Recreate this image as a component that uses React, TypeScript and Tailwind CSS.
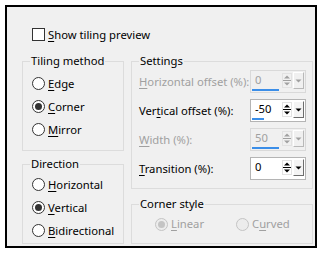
import React from 'react';

function Mn({ t, i }: { t: string; i: number }) {
  return (
    <>
      {t.slice(0, i)}
      <span className="underline decoration-1 underline-offset-[2px]">{t[i]}</span>
      {t.slice(i + 1)}
    </>
  );
}

function Radio({
  label,
  u,
  checked = false,
  disabled = false,
  h = 'h-[23px]',
  w = '',
}: {
  label: string;
  u: number;
  checked?: boolean;
  disabled?: boolean;
  h?: string;
  w?: string;
}) {
  return (
    <div className={`flex items-center ${h} ${w}`}>
      <div
        className={`flex h-[13px] w-[13px] shrink-0 items-center justify-center rounded-full border ${
          disabled ? 'border-[#c4c4c4] bg-[#ececec]' : 'border-[#333333] bg-white'
        }`}
      >
        {checked && (
          <div className={`h-[7px] w-[7px] rounded-full ${disabled ? 'bg-[#c4c4c4]' : 'bg-[#333333]'}`} />
        )}
      </div>
      <span className={`ml-[3px] whitespace-nowrap ${disabled ? 'text-[#a0a0a0]' : 'text-black'}`}>
        <Mn t={label} i={u} />
      </span>
    </div>
  );
}

function Group({
  title,
  className,
  inner,
  children,
}: {
  title: string;
  className: string;
  inner: string;
  children?: React.ReactNode;
}) {
  return (
    <fieldset className={`min-w-0 border border-[#dcdcdc] ${className}`}>
      <legend className="ml-[7px] h-[16px] px-[1px] leading-[16px] text-black">{title}</legend>
      <div className={inner}>{children}</div>
    </fieldset>
  );
}

function Spin({ value, bar, disabled = false }: { value: string; bar?: string; disabled?: boolean }) {
  const c = disabled ? '#a0a0a0' : '#000000';
  return (
    <div
      className={`flex h-[23px] w-[56px] shrink-0 border ${
        disabled ? 'border-[#d9d9d9] bg-[#f0f0f0]' : 'border-[#b4b4b4] bg-white'
      }`}
    >
      <div className="flex w-[31px] flex-col pb-[1px] pl-[1px]">
        <div className={`flex flex-1 items-center pl-[3px] ${disabled ? 'text-[#a0a0a0]' : 'text-black'}`}>
          {value}
        </div>
        <div className={`h-[2px] ${bar ?? 'w-0'} ${bar ? 'bg-[#3b8ee8]' : ''}`} />
      </div>
      <svg width="10" height="21" viewBox="0 0 10 21" className="shrink-0">
        <rect x="0.5" y="2.5" width="9" height="14" fill="none" stroke="#e2e2e2" />
        <polygon points="2,7.5 5,4.5 8,7.5" fill={c} />
        <line x1="1" y1="9.5" x2="9" y2="9.5" stroke={c} strokeWidth="1" />
        <polygon points="2,11.5 8,11.5 5,14.5" fill={c} />
      </svg>
      <div
        className={`ml-[1px] mt-[1px] flex h-[17px] w-[11px] shrink-0 items-center justify-center border-b border-l border-r border-t ${
          disabled
            ? 'border-b-[#b8b8b8] border-l-white border-r-[#b8b8b8] border-t-white bg-[#f0f0f0]'
            : 'border-b-[#6d6d6d] border-l-white border-r-[#6d6d6d] border-t-white bg-[#f4f4f4]'
        }`}
      >
        <svg width="7" height="4" viewBox="0 0 7 4">
          <polygon points="0.5,0.5 6.5,0.5 3.5,3.5" fill={c} />
        </svg>
      </div>
    </div>
  );
}

function Row({
  label,
  u,
  value,
  bar,
  disabled = false,
}: {
  label: string;
  u: number;
  value: string;
  bar?: string;
  disabled?: boolean;
}) {
  return (
    <div className="flex h-[23px] items-center justify-between">
      <span className={`whitespace-nowrap ${disabled ? 'text-[#a0a0a0]' : 'text-black'}`}>
        <Mn t={label} i={u} />
      </span>
      <Spin value={value} bar={bar} disabled={disabled} />
    </div>
  );
}

export default function App() {
  return (
    <div className="h-[253px] w-[323px] bg-white pb-[5px] pl-[5px] pr-[6px] pt-[5px] font-['Noto_Sans','Liberation_Sans',sans-serif] text-[11.25px] leading-[16px] text-black">
      <div className="h-full border-2 border-black">
        <div className="flex h-full flex-col bg-[#f0f0f0] pb-[2px] pl-[15px] pr-[2px] pt-[20px]">
          <div className="ml-[10px] flex h-[15px] items-center">
            <div className="h-[13px] w-[13px] border border-[#333333] bg-white" />
            <span className="ml-[3px]">
              <Mn t="Show tiling preview" i={0} />
            </span>
          </div>
          <div className="mt-[11px] flex flex-1 gap-[7px]">
            <div className="flex w-[102px] flex-col">
              <Group title="Tiling method" className="h-[98px]" inner="pl-[9px] pt-[3px]">
                <Radio label="Edge" u={0} />
                <Radio label="Corner" u={0} checked />
                <Radio label="Mirror" u={0} />
              </Group>
              <Group title="Direction" className="mt-[5px] flex-1" inner="pl-[9px] pt-[1px]">
                <Radio label="Horizontal" u={0} />
                <Radio label="Vertical" u={0} checked />
                <Radio label="Bidirectional" u={0} />
              </Group>
            </div>
            <div className="flex flex-1 flex-col">
              <Group title="Settings" className="h-[136px]" inner="flex flex-col gap-[6px] pl-[7px] pr-[6px] pt-[1px]">
                <Row label="Horizontal offset (%):" u={0} value="0" bar="w-[27px]" disabled />
                <Row label="Vertical offset (%):" u={3} value="-50" bar="w-[12px]" />
                <Row label="Width (%):" u={0} value="50" bar="w-[27px]" disabled />
                <Row label="Transition (%):" u={0} value="0" />
              </Group>
              <Group title="Corner style" className="mt-[7px] flex-1" inner="flex pl-[23px] pt-[4px]">
                <Radio label="Linear" u={0} checked disabled h="h-[16px]" w="w-[81px]" />
                <Radio label="Curved" u={1} disabled h="h-[16px]" />
              </Group>
            </div>
          </div>
        </div>
      </div>
    </div>
  );
}
